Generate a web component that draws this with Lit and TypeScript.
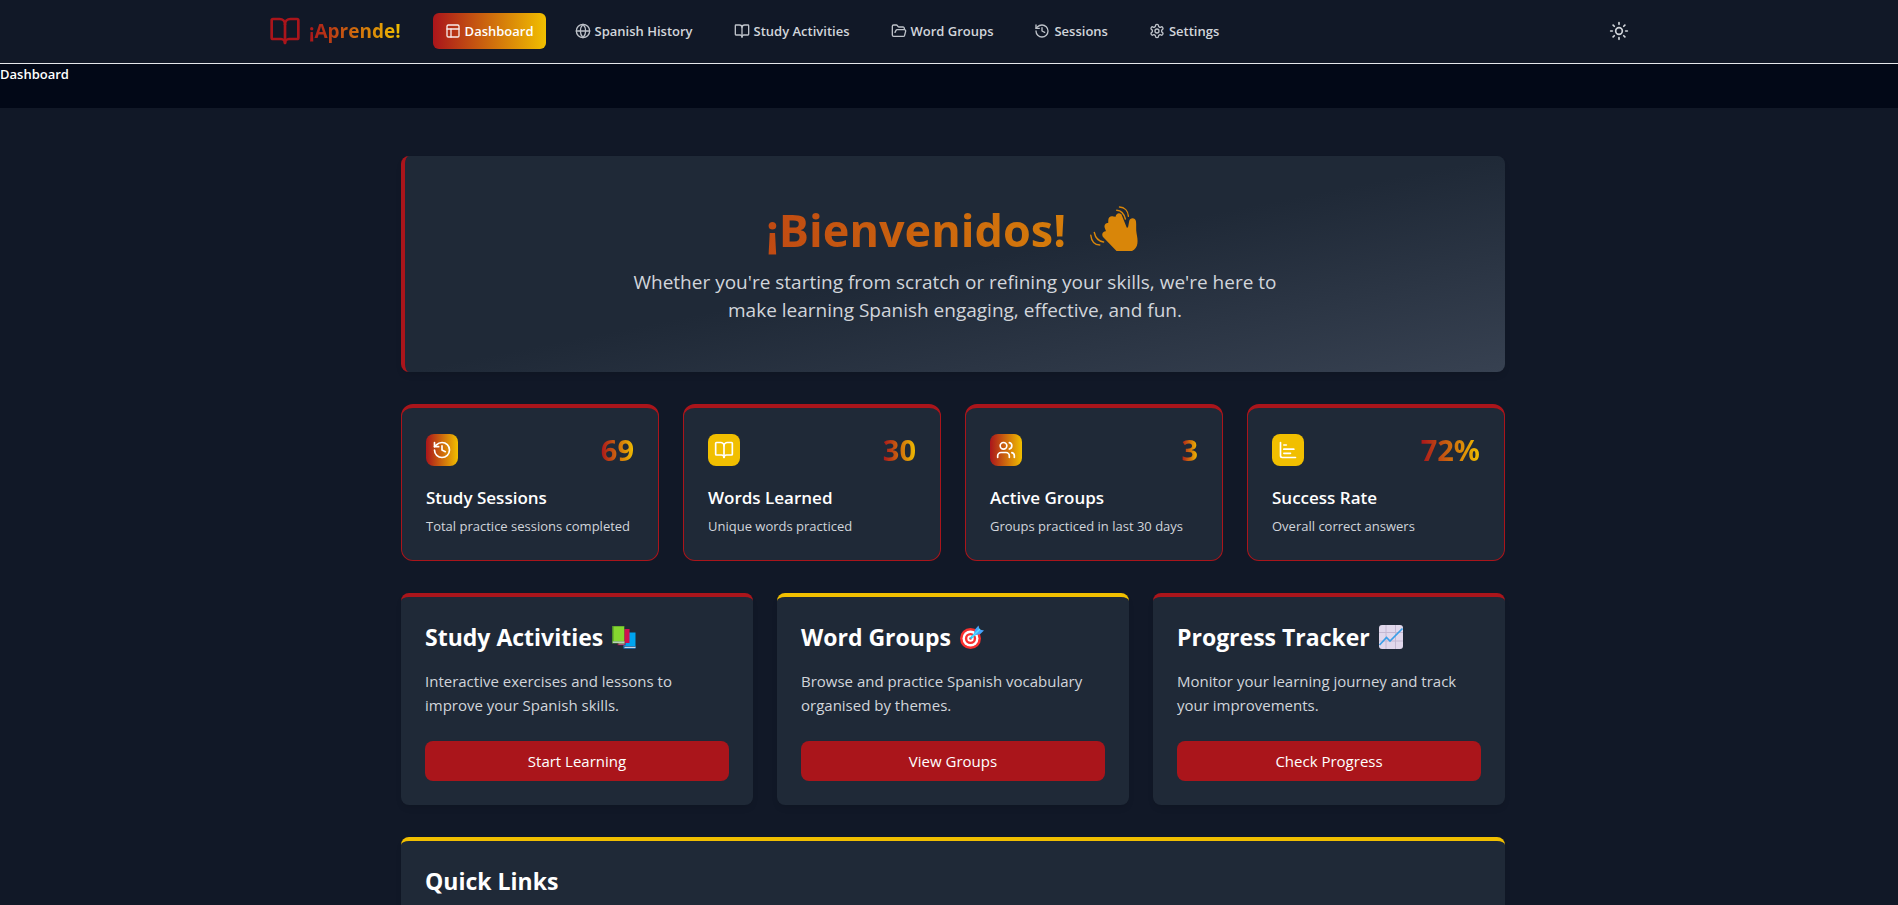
import { LitElement, html, css, svg, TemplateResult } from "lit";
import { customElement } from "lit/decorators.js";
import { classMap } from "lit/directives/class-map.js";

const ICONS: Record<string, TemplateResult> = {
  layout: svg`<rect width="18" height="18" x="3" y="3" rx="2"/><path d="M3 9h18"/><path d="M9 21V9"/>`,
  globe: svg`<circle cx="12" cy="12" r="10"/><path d="M12 2a14.5 14.5 0 0 0 0 20 14.5 14.5 0 0 0 0-20"/><path d="M2 12h20"/>`,
  book: svg`<path d="M12 7v14"/><path d="M3 18a1 1 0 0 1-1-1V4a1 1 0 0 1 1-1h5a4 4 0 0 1 4 4 4 4 0 0 1 4-4h5a1 1 0 0 1 1 1v13a1 1 0 0 1-1 1h-6a3 3 0 0 0-3 3 3 3 0 0 0-3-3z"/>`,
  folder: svg`<path d="m6 14 1.5-2.9A2 2 0 0 1 9.24 10H20a2 2 0 0 1 1.94 2.5l-1.54 6a2 2 0 0 1-1.95 1.5H4a2 2 0 0 1-2-2V5a2 2 0 0 1 2-2h3.9a2 2 0 0 1 1.69.9l.81 1.2a2 2 0 0 0 1.67.9H18a2 2 0 0 1 2 2v2"/>`,
  history: svg`<path d="M3 12a9 9 0 1 0 9-9 9.75 9.75 0 0 0-6.74 2.74L3 8"/><path d="M3 3v5h5"/><path d="M12 7v5l4 2"/>`,
  settings: svg`<path d="M12.22 2h-.44a2 2 0 0 0-2 2v.18a2 2 0 0 1-1 1.73l-.43.25a2 2 0 0 1-2 0l-.15-.08a2 2 0 0 0-2.73.73l-.22.38a2 2 0 0 0 .73 2.73l.15.1a2 2 0 0 1 1 1.72v.51a2 2 0 0 1-1 1.74l-.15.09a2 2 0 0 0-.73 2.73l.22.38a2 2 0 0 0 2.73.73l.15-.08a2 2 0 0 1 2 0l.43.25a2 2 0 0 1 1 1.73V20a2 2 0 0 0 2 2h.44a2 2 0 0 0 2-2v-.18a2 2 0 0 1 1-1.73l.43-.25a2 2 0 0 1 2 0l.15.08a2 2 0 0 0 2.73-.73l.22-.39a2 2 0 0 0-.73-2.73l-.15-.08a2 2 0 0 1-1-1.74v-.5a2 2 0 0 1 1-1.74l.15-.09a2 2 0 0 0 .73-2.73l-.22-.38a2 2 0 0 0-2.73-.73l-.15.08a2 2 0 0 1-2 0l-.43-.25a2 2 0 0 1-1-1.73V4a2 2 0 0 0-2-2z"/><circle cx="12" cy="12" r="3"/>`,
  sun: svg`<circle cx="12" cy="12" r="4"/><path d="M12 2v2"/><path d="M12 20v2"/><path d="m4.93 4.93 1.41 1.41"/><path d="m17.66 17.66 1.41 1.41"/><path d="M2 12h2"/><path d="M20 12h2"/><path d="m6.34 17.66-1.41 1.41"/><path d="m19.07 4.93-1.41 1.41"/>`,
  users: svg`<path d="M16 21v-2a4 4 0 0 0-4-4H6a4 4 0 0 0-4 4v2"/><circle cx="9" cy="7" r="4"/><path d="M22 21v-2a4 4 0 0 0-3-3.87"/><path d="M16 3.13a4 4 0 0 1 0 7.75"/>`,
  chart: svg`<path d="M3 3v16a2 2 0 0 0 2 2h16"/><path d="M7 16h8"/><path d="M7 11h12"/><path d="M7 6h3"/>`,
};

const icon = (name: string) => html`<svg class="icon" viewBox="0 0 24 24" aria-hidden="true">${ICONS[name]}</svg>`;

const books = html`<svg class="pictogram" viewBox="0 0 26 26" aria-hidden="true">
  <path d="M12.5 8.5h12v15h-12z" fill="#00a4ef"/><path d="M12.5 22h12v3h-12z" fill="#1d5f9c"/><path d="M13.5 22.800h11v1.200h-11z" fill="#c8d6e4"/>
  <path d="M6.5 5h12v14h-12z" fill="#d01050"/><path d="M6.500 18.500h8v2.800h-8z" fill="#8f0e3f"/><path d="M7.500 19.200h6v1.200h-6z" fill="#d3c8da"/>
  <path d="M1 2h12.500v17.500h-12.500z" fill="#4f8f2a"/><path d="M2.500 2.500h10.500v14.500h-10.500z" fill="#86d72f"/><path d="M1.800 17.500h11.700v1.300h-11.700z" fill="#d5e3dc"/>
</svg>`;

const target = html`<svg class="pictogram" viewBox="0 0 26 26" aria-hidden="true">
  <circle cx="11.500" cy="14.500" r="10.500" fill="#f8312f"/><circle cx="11.500" cy="14.500" r="8" fill="#fff"/>
  <circle cx="11.500" cy="14.500" r="5.600" fill="#f8312f"/><circle cx="11.500" cy="14.500" r="3.200" fill="#fff"/><circle cx="11.500" cy="14.500" r="1.300" fill="#f8312f"/>
  <path d="M11.500 14.500 20 6" stroke="#26c9fc" stroke-width="2.400"/><path d="M14.500 11.500 16 5.500 19.500 1.500 20.500 5.500 25 6.500 21 10.200Z" fill="#46a4fb"/>
  <path d="M13 13 21 5" stroke="#50e2ff" stroke-width="1.500"/>
</svg>`;

const growth = html`<svg class="pictogram" viewBox="0 0 26 26" aria-hidden="true">
  <rect x="1" y="1" width="24" height="24" rx="3" fill="#e1d8ec"/>
  <path d="M1 8.500h24M1 17h24M8 1v24M17.500 1v24" stroke="#c4b8d2" stroke-width="1"/>
  <path d="M1.500 21 8.500 13.500 12 17 24.500 4.500" fill="none" stroke="#3a9fe8" stroke-width="1.700"/>
</svg>`;

const wave = html`<svg class="wave" viewBox="0 0 56 48" aria-hidden="true">
  <path fill="#d98609" d="M28.500 47 15.500 33.500C13.500 31.300 14 28.500 16.500 27.500 17 27.300 17.500 27.200 18 27.300L16.800 24C15.800 21 17.500 18.800 20.200 19L20.300 16C20.300 12.800 23 11.500 25.500 12.500L27.600 12.800C28 9.500 31 8 33.400 10.300L38.700 23.500C39.500 24 40 23.500 40.200 22.500L41.200 17C41.800 13.600 47.300 13 48 17.500 48.500 21.500 47.800 25.500 48.600 29.500 49.200 33 49.900 36 49.400 39.500 48.900 43 47 45.500 44 47Z"/>
  <path fill="none" stroke="#d98609" stroke-width="1.400" stroke-linecap="round" d="M31.500 3c5 .2 8.600 3.800 8.900 9.300M28.700 6.200c4.500.2 7.300 3.200 8.700 8.800M2.800 31.200c.6 5.800 3.900 9.600 9 9.800M6.300 28.500c1 5 4.200 8.600 9.300 9.500"/>
</svg>`;

const NAV = [
  { icon: "layout", label: "Dashboard", active: true },
  { icon: "globe", label: "Spanish History" },
  { icon: "book", label: "Study Activities" },
  { icon: "folder", label: "Word Groups" },
  { icon: "history", label: "Sessions" },
  { icon: "settings", label: "Settings" },
];

const STATS = [
  { icon: "history", value: "69", title: "Study Sessions", text: "Total practice sessions completed" },
  { icon: "book", value: "30", title: "Words Learned", text: "Unique words practiced", gold: true },
  { icon: "users", value: "3", title: "Active Groups", text: "Groups practiced in last 30 days" },
  { icon: "chart", value: "72%", title: "Success Rate", text: "Overall correct answers", gold: true },
];

const ACTIONS = [
  { title: "Study Activities", art: books, text: "Interactive exercises and lessons to improve your Spanish skills.", button: "Start Learning" },
  { title: "Word Groups", art: target, text: "Browse and practice Spanish vocabulary organised by themes.", button: "View Groups", gold: true },
  { title: "Progress Tracker", art: growth, text: "Monitor your learning journey and track your improvements.", button: "Check Progress" },
];

@customElement("app-root")
export class AppRoot extends LitElement {
  static styles = css`
    :host {
      --red: #aa151b;
      --gold: #f1bf00;
      --flag: linear-gradient(to right, var(--red), var(--gold));
      --card: #1f2937;
      display: block;
      height: 100vh;
      overflow-y: auto;
      scrollbar-width: none;
      background: #111827;
      color: #fff;
      font-family: "Open Sans", "Noto Sans", sans-serif;
      font-size: 15px;
      line-height: 24px;
    }
    * { box-sizing: border-box; }
    h1, h2, h3, p { margin: 0; }
    a { color: inherit; text-decoration: none; }
    button { font: inherit; color: inherit; border: 0; cursor: pointer; }
    .icon {
      display: block;
      flex: none;
      width: 16px;
      height: 16px;
      fill: none;
      stroke: currentColor;
      stroke-width: 2;
      stroke-linecap: round;
      stroke-linejoin: round;
    }
    .flag-text {
      background: var(--flag);
      -webkit-background-clip: text;
      background-clip: text;
      color: transparent;
    }
    .topbar { border-bottom: 1px solid #e5e7eb; }
    .topbar-inner {
      display: flex;
      align-items: center;
      gap: 32px;
      max-width: 1400px;
      height: 63px;
      margin: 0 auto;
      padding: 0 20px 1px;
    }
    .brand { display: flex; align-items: center; gap: 8px; font-size: 19px; font-weight: 700; }
    .brand .icon { width: 32px; height: 32px; color: var(--red); }
    nav { display: flex; gap: 17px; }
    .nav-link {
      display: flex;
      align-items: center;
      gap: 4px;
      height: 36px;
      padding: 0 12px;
      border-radius: 6px;
      font-size: 13px;
      font-weight: 600;
      line-height: 20px;
      color: #d1d5db;
      white-space: nowrap;
    }
    .nav-link .icon { opacity: 0.9; }
    .nav-link.active { background: var(--flag); color: #fff; }
    .theme { display: block; margin-left: auto; padding: 0; background: none; color: #d1d5db; }
    .theme .icon { width: 20px; height: 20px; }
    .crumbs { padding-bottom: 24px; background: #020817; font-size: 13px; font-weight: 600; line-height: 20px; }
    .page { padding-left: 8px; }
    main {
      display: grid;
      gap: 32px;
      max-width: 1152px;
      margin: 0 auto;
      padding: 48px 24px;
    }
    .hero {
      padding: 48px;
      border-left: 4px solid var(--red);
      border-radius: 8px;
      background: linear-gradient(to bottom right, var(--card), var(--card) 50%, #374151);
      box-shadow: 0 4px 6px -1px rgb(0 0 0 / 0.1);
      text-align: center;
    }
    .hero h1 {
      display: flex;
      justify-content: center;
      align-items: flex-start;
      gap: 22px;
      margin-bottom: 12px;
      font-size: 45px;
      font-weight: 700;
      line-height: 52px;
    }
    .wave { display: block; width: 56px; height: 48px; }
    .hero p { max-width: 672px; margin: 0 auto; font-size: 19px; line-height: 28px; color: #d1d5db; }
    .stats { display: grid; grid-template-columns: repeat(4, 1fr); gap: 24px; }
    .stat {
      padding: 24px;
      border: 1px solid var(--red);
      border-top-width: 4px;
      border-radius: 12px;
      background: var(--card);
    }
    .stat-head { display: flex; justify-content: space-between; align-items: center; margin-bottom: 16px; }
    .badge { padding: 6px; border-radius: 8px; background: var(--flag); }
    .badge.gold { background: var(--gold); }
    .badge .icon { width: 20px; height: 20px; }
    .value { font-size: 29px; font-weight: 700; line-height: 36px; }
    .stat h3 { margin-bottom: 4px; font-size: 17px; font-weight: 600; line-height: 28px; }
    .stat p { font-size: 13px; line-height: 20px; color: #d1d5db; }
    .actions { display: grid; grid-template-columns: repeat(3, 1fr); gap: 24px; }
    .panel {
      padding: 24px;
      border-top: 4px solid var(--red);
      border-radius: 8px;
      background: var(--card);
      box-shadow: 0 4px 6px -1px rgb(0 0 0 / 0.1);
    }
    .panel.gold { border-top-color: var(--gold); }
    .panel h2 {
      display: flex;
      align-items: center;
      gap: 8px;
      margin-bottom: 16px;
      font-size: 23px;
      font-weight: 700;
      line-height: 32px;
    }
    .pictogram { display: block; width: 26px; height: 26px; }
    .panel p { margin-bottom: 24px; color: #d1d5db; }
    .action { display: block; width: 100%; height: 40px; padding: 0 16px; border-radius: 8px; background: var(--red); }
  `;

  render() {
    return html`
      <header class="topbar">
        <div class="topbar-inner">
          <a class="brand" href="#">${icon("book")}<span class="flag-text">¡Aprende!</span></a>
          <nav>
            ${NAV.map((n) => html`<a href="#" class=${classMap({ "nav-link": true, active: !!n.active })}>${icon(n.icon)}${n.label}</a>`)}
          </nav>
          <button class="theme" aria-label="Toggle theme">${icon("sun")}</button>
        </div>
      </header>
      <div class="crumbs">Dashboard</div>
      <div class="page">
        <main>
          <section class="hero">
            <h1 class="flag-text">¡Bienvenidos!${wave}</h1>
            <p>Whether you're starting from scratch or refining your skills, we're here to make learning Spanish engaging, effective, and fun.</p>
          </section>
          <section class="stats">
            ${STATS.map((s) => html`
              <article class="stat">
                <div class="stat-head">
                  <span class=${classMap({ badge: true, gold: !!s.gold })}>${icon(s.icon)}</span>
                  <span class="value flag-text">${s.value}</span>
                </div>
                <h3>${s.title}</h3>
                <p>${s.text}</p>
              </article>`)}
          </section>
          <section class="actions">
            ${ACTIONS.map((a) => html`
              <article class=${classMap({ panel: true, gold: !!a.gold })}>
                <h2>${a.title}${a.art}</h2>
                <p>${a.text}</p>
                <button class="action">${a.button}</button>
              </article>`)}
          </section>
          <section class="panel gold">
            <h2>Quick Links</h2>
          </section>
        </main>
      </div>
    `;
  }
}
